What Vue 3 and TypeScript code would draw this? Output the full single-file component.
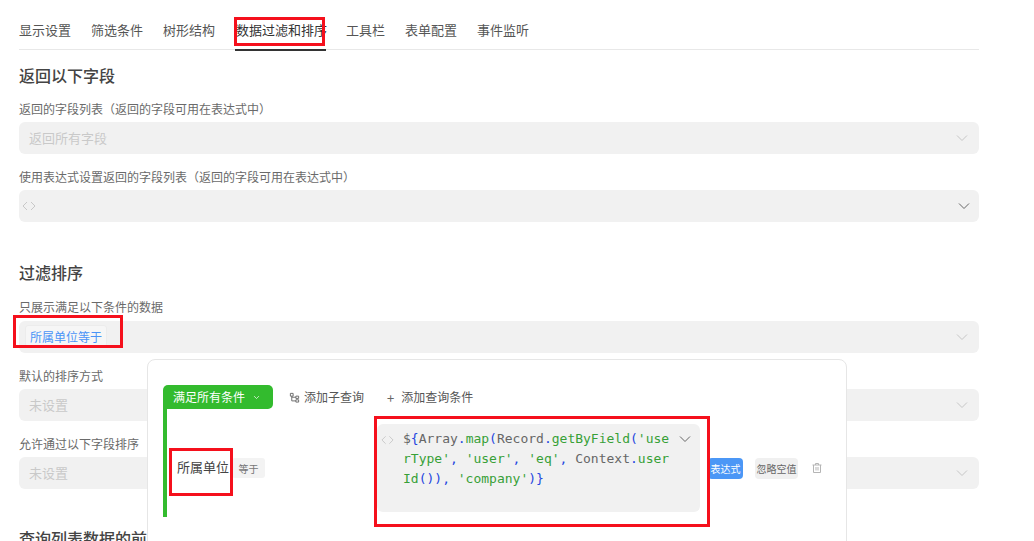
<script setup lang="ts">
const tabs: string[] = ['显示设置', '筛选条件', '树形结构', '数据过滤和排序', '工具栏', '表单配置', '事件监听']
const activeTab = '数据过滤和排序'
</script>

<template>
  <div class="page">
    <nav class="tabs">
      <span v-for="t in tabs" :key="t" class="tab" :class="{ active: t === activeTab }">
        {{ t }}
        <i v-if="t === activeTab" class="mark tab-mark"></i>
      </span>
    </nav>

    <h2 class="title first">返回以下字段</h2>
    <div class="label l1">返回的字段列表（返回的字段可用在表达式中）</div>
    <div class="select">
      <span class="ph">返回所有字段</span>
      <svg class="chev light" viewBox="0 0 12 8"><path d="M1 1.5 6 6.5 11 1.5" /></svg>
    </div>
    <div class="label">使用表达式设置返回的字段列表（返回的字段可用在表达式中）</div>
    <div class="select expr">
      <svg class="code-ic" viewBox="0 0 14 10"><path d="M5 1 1 5 5 9M9 1 13 5 9 9" /></svg>
      <svg class="chev dark" viewBox="0 0 12 8"><path d="M1 1.5 6 6.5 11 1.5" /></svg>
    </div>

    <h2 class="title second">过滤排序</h2>
    <div class="label l2">只展示满足以下条件的数据</div>
    <div class="select tagged">
      <span class="value-tag">所属单位等于<i class="mark tag-mark"></i></span>
      <svg class="chev light" viewBox="0 0 12 8"><path d="M1 1.5 6 6.5 11 1.5" /></svg>
    </div>
    <div class="label">默认的排序方式</div>
    <div class="select">
      <span class="ph">未设置</span>
      <svg class="chev light" viewBox="0 0 12 8"><path d="M1 1.5 6 6.5 11 1.5" /></svg>
    </div>
    <div class="label">允许通过以下字段排序</div>
    <div class="select">
      <span class="ph">未设置</span>
      <svg class="chev light" viewBox="0 0 12 8"><path d="M1 1.5 6 6.5 11 1.5" /></svg>
    </div>
    <h2 class="title third">查询列表数据的前</h2>

    <section class="pop">
      <div class="pop-head">
        <button class="match"><span class="lift">满足所有条件</span>
          <svg class="mini" viewBox="0 0 10 6"><path d="M1.500 1 5 4.500 8.500 1" /></svg>
        </button>
        <span class="act">
          <svg class="tree" viewBox="0 0 12 12"><path d="M1.500 1.500h3v3h-3zM7.500 4.500h3v2.500h-3zM7.500 8.500h3v2.500h-3zM3 4.500V9.700h4.500M3 5.700h4.500" /></svg>
          <span class="lift">添加子查询</span>
        </span>
        <span class="act add"><b class="plus">+</b><span class="lift">添加查询条件</span></span>
      </div>
      <div class="rule">
        <span class="field">所属单位<i class="mark field-mark"></i></span>
        <span class="op">等于</span>
        <div class="code">
          <i class="mark code-mark"></i>
          <svg class="code-ic in" viewBox="0 0 14 10"><path d="M5 1 1 5 5 9M9 1 13 5 9 9" /></svg>
          <div class="src"><span class="g">$</span><span class="b">{</span><span class="g">Array</span><span class="b">.</span><span class="s">map</span><span class="b">(</span><span class="g">Record</span><span class="b">.</span><span class="s">getByField</span><span class="b">(</span><span class="s">'userType'</span><span class="b">,</span> <span class="s">'user'</span><span class="b">,</span> <span class="s">'eq'</span><span class="b">,</span> <span class="g">Context</span><span class="b">.</span><span class="s">userId</span><span class="b">()),</span> <span class="s">'company'</span><span class="b">)}</span></div>
          <svg class="chev dark code-chev" viewBox="0 0 12 8"><path d="M1 1.500 6 6.500 11 1.500" /></svg>
        </div>
        <span class="btn-expr">表达式</span>
        <span class="btn-skip">忽略空值</span>
        <svg class="trash" viewBox="0 0 12 12"><path d="M1.500 3h9M4.500 3V1.500h3V3M2.500 3v7.500h7V3M5 5v3.500M7 5v3.500" /></svg>
      </div>
    </section>
  </div>
</template>

<style scoped>
.page {
  position: relative;
  height: 541px;
  overflow: hidden;
  box-sizing: border-box;
  padding: 0 55px 0 19px;
  font-family: "Noto Sans CJK SC", "Noto Sans", sans-serif;
  color: #555;
  background: #fff;
}
.tabs {
  display: flex;
  gap: 20px;
  height: 49px;
  border-bottom: 1px solid #e8e8e8;
}
.tab {
  position: relative;
  padding-top: 20px;
  font-size: 13px;
  line-height: 19px;
  color: #555;
  white-space: nowrap;
}
.tab.active {
  color: #333;
  box-shadow: inset 0 -2px 0 #333;
  height: 51px;
  box-sizing: border-box;
  padding-left: 1px;
  width: 91px;
}
.mark {
  position: absolute;
  border: 3px solid #f5101c;
  box-sizing: border-box;
  pointer-events: none;
}
.tab-mark { left: -1px; top: 17px; width: 91px; height: 29px; }
.title {
  margin: 0;
  font-size: 16px;
  line-height: 24px;
  font-weight: 500;
  color: #444;
}
.title.first { margin-top: 13px; }
.title.second { margin-top: 38px; }
.title.third { margin-top: 37px; }
.label {
  margin-top: 14px;
  margin-bottom: 4px;
  font-size: 12px;
  line-height: 18px;
  color: #6a6a6a;
}
.label.l1 { margin-top: 13px; }
.label.l2 { margin-top: 14px; margin-bottom: 5px; }
.select {
  position: relative;
  display: flex;
  align-items: center;
  height: 32px;
  box-sizing: border-box;
  padding: 0 10px 2px;
  border-radius: 6px;
  background: #f1f1f1;
}
.select.expr { padding-left: 3px; padding-bottom: 0; }
.select.tagged { padding-left: 6px; }
.ph { font-size: 13px; color: #c9c9c9; }
.chev {
  position: absolute;
  right: 11px;
  top: 12px;
  width: 12px;
  height: 8px;
  fill: none;
  stroke-width: 1;
}
.chev.light { stroke: #c6c6c6; }
.chev.dark { stroke: #666; right: 9px; }
.code-ic {
  width: 14px;
  height: 10px;
  fill: none;
  stroke: #c8c8c8;
  stroke-width: 1;
}
.value-tag {
  position: relative;
  display: flex;
  align-items: center;
  height: 20px;
  padding: 0 4px;
  border: 1px solid #ececec;
  border-radius: 3px;
  background: #f6f6f6;
  color: #4a94f7;
  font-size: 12px;
}
.tag-mark { left: -13px; top: -11px; width: 110px; height: 33px; }
.pop {
  position: absolute;
  left: 147px;
  top: 359px;
  width: 700px;
  height: 230px;
  box-sizing: border-box;
  padding: 25px 15px;
  border: 1px solid #e6e6e6;
  border-radius: 8px;
  background: #fff;
}
.pop-head {
  display: flex;
  align-items: center;
  height: 24px;
}
.lift { position: relative; top: -1px; }
.match {
  display: flex;
  align-items: center;
  gap: 8px;
  width: 110px;
  height: 24px;
  padding: 0 0 0 10px;
  border: 0;
  border-radius: 5px 5px 5px 0;
  background: #33bb2e;
  color: #fff;
  font: inherit;
  font-size: 12px;
}
.mini {
  width: 7px;
  height: 5px;
  fill: none;
  stroke: #fff;
  stroke-width: 1;
}
.act {
  display: flex;
  align-items: center;
  font-size: 12px;
  color: #555;
  margin-left: 16px;
}
.add { margin-left: 23px; }
.tree {
  width: 11px;
  height: 11px;
  margin-right: 4px;
  fill: none;
  stroke: #666;
  stroke-width: 1;
}
.plus {
  font-weight: 400;
  font-size: 13px;
  margin-right: 7px;
  color: #666;
}
.rule {
  display: flex;
  align-items: center;
  height: 108px;
  box-sizing: border-box;
  padding: 10px 0 0 10px;
  border-left: 4px solid #33bb2e;
}
.field {
  position: relative;
  top: -2px;
  font-size: 13px;
  color: #444;
  width: 55px;
  white-space: nowrap;
}
.field-mark { left: -8px; top: -9px; width: 64px; height: 48px; }
.op {
  display: flex;
  align-items: center;
  justify-content: center;
  width: 33px;
  height: 20px;
  border-radius: 3px;
  background: #f3f3f3;
  color: #777;
  font-size: 10px;
}
.code {
  position: relative;
  width: 323px;
  height: 88px;
  margin-left: 112px;
  box-sizing: border-box;
  padding: 5px 0 0 26px;
  border-radius: 6px;
  background: #f1f1f1;
}
.code-mark { left: -3px; top: -8px; width: 336px; height: 111px; }
.code-ic.in {
  position: absolute;
  left: 4px;
  top: 11px;
  width: 13px;
}
.src {
  width: 268px;
  font-family: "DejaVu Sans Mono", monospace;
  font-size: 13px;
  line-height: 20px;
  word-break: break-all;
}
.g { color: #666; }
.b { color: #2446e0; }
.s { color: #37a037; }
.code-chev { top: 11px; right: 9px; }
.btn-expr {
  display: flex;
  align-items: center;
  justify-content: center;
  width: 35px;
  height: 21px;
  margin-left: 8px;
  border-radius: 4px;
  background: #4b97f6;
  color: #fff;
  font-size: 10px;
}
.btn-skip {
  display: flex;
  align-items: center;
  justify-content: center;
  width: 43px;
  height: 21px;
  margin-left: 12px;
  border-radius: 4px;
  background: #f0f0f0;
  color: #666;
  font-size: 10px;
}
.trash {
  width: 12px;
  height: 12px;
  margin-left: 13px;
  fill: none;
  stroke: #b5b5b5;
  stroke-width: 1;
}
</style>
